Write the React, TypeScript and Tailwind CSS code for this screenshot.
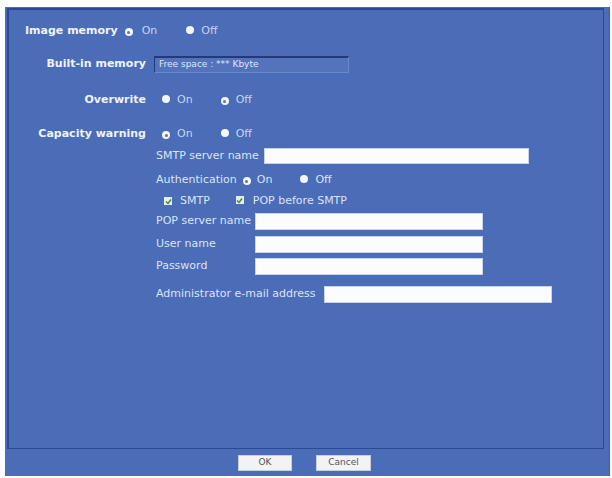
import React from 'react';

const font = { fontFamily: '"DejaVu Sans", Verdana, sans-serif' };

const Radio = ({ ring }: { ring?: boolean }) =>
  ring ? (
    <span className="inline-flex w-[8px] h-[8px] rounded-full bg-[#f4f6fb] items-center justify-center">
      <span className="w-[3px] h-[3px] rounded-full bg-[#5a74b4]" />
    </span>
  ) : (
    <span className="inline-block w-[8px] h-[8px] rounded-full bg-[#f4f6fb]" />
  );

const Check = () => (
  <span className="inline-flex w-[8px] h-[8px] bg-[#e4ecea] items-center justify-center">
    <svg width="7" height="7" viewBox="0 0 7 7">
      <path d="M1 3.5 L3 5.5 L6 1.5" stroke="#3f8a3a" strokeWidth="1.4" fill="none" />
    </svg>
  </span>
);

const Field = ({ w }: { w: string }) => (
  <div className={`h-full bg-[#fbfcfe] border border-[#c9d3ea] ${w}`} />
);

export default function App() {
  return (
    <div className="w-[612px] h-[478px] bg-white pt-[7px] pl-[5px]" style={font}>
      {/* window frame */}
      <div className="w-[605px] h-[469px] bg-[#4b6cb6] flex flex-col border-r border-[#3f5ea8]">
        {/* main panel */}
        <div className="ml-[2px] mt-[1px] w-[597px] h-[441px] border-t-2 border-l-2 border-r border-b border-[#2c4a93] text-[11px] text-[#dbe3f4]">
          {/* Image memory */}
          <div className="mt-[14px] h-[14px] flex items-center pl-[16px]">
            <span className="font-bold text-[#eef2fa]">Image memory</span>
            <span className="ml-[7px]"><Radio ring /></span>
            <span className="ml-[9px] text-[#c9d5ee]">On</span>
            <span className="ml-[29px]"><Radio /></span>
            <span className="ml-[7px] text-[#c9d5ee]">Off</span>
          </div>

          {/* Built-in memory */}
          <div className="mt-[18px] h-[17px] flex items-center">
            <span className="w-[137px] text-right font-bold text-[#eef2fa]">Built-in memory</span>
            <div className="ml-[8px] w-[195px] h-full bg-[#5573bb] border-t-2 border-l border-[#23397a] border-b border-r border-b-[#6d88c8] border-r-[#6d88c8] flex items-center pl-[4px] text-[9px] text-[#dfe6f5]">
              Free space : *** Kbyte
            </div>
          </div>

          {/* Overwrite */}
          <div className="mt-[20px] h-[14px] flex items-center">
            <span className="w-[137px] text-right font-bold text-[#eef2fa]">Overwrite</span>
            <span className="ml-[16px]"><Radio /></span>
            <span className="ml-[7px] text-[#c9d5ee]">On</span>
            <span className="ml-[28px]"><Radio ring /></span>
            <span className="ml-[7px] text-[#c9d5ee]">Off</span>
          </div>

          {/* Capacity warning */}
          <div className="mt-[20px] h-[14px] flex items-center">
            <span className="w-[137px] text-right font-bold text-[#eef2fa]">Capacity warning</span>
            <span className="ml-[16px]"><Radio ring /></span>
            <span className="ml-[7px] text-[#c9d5ee]">On</span>
            <span className="ml-[28px]"><Radio /></span>
            <span className="ml-[7px] text-[#c9d5ee]">Off</span>
          </div>

          <div className="pl-[147px]">
            <div className="mt-[7px] h-[16px] flex items-center">
              <span className="w-[108px] whitespace-nowrap">SMTP server name</span>
              <Field w="w-[265px]" />
            </div>

            <div className="mt-[9px] h-[14px] flex items-center">
              <span>Authentication</span>
              <span className="ml-[6px]"><Radio ring /></span>
              <span className="ml-[6px]">On</span>
              <span className="ml-[28px]"><Radio /></span>
              <span className="ml-[7px]">Off</span>
            </div>

            <div className="mt-[7px] h-[14px] flex items-center pl-[8px]">
              <Check />
              <span className="ml-[8px]">SMTP</span>
              <span className="ml-[26px]"><Check /></span>
              <span className="ml-[9px]">POP before SMTP</span>
            </div>

            <div className="mt-[5px] h-[17px] flex items-center">
              <span className="w-[99px] whitespace-nowrap">POP server name</span>
              <Field w="w-[228px]" />
            </div>
            <div className="mt-[6px] h-[17px] flex items-center">
              <span className="w-[99px]">User name</span>
              <Field w="w-[228px]" />
            </div>
            <div className="mt-[5px] h-[17px] flex items-center">
              <span className="w-[99px]">Password</span>
              <Field w="w-[228px]" />
            </div>

            <div className="mt-[11px] h-[17px] flex items-center">
              <span className="w-[168px] whitespace-nowrap">Administrator e-mail address</span>
              <Field w="w-[228px]" />
            </div>
          </div>
        </div>

        {/* button strip */}
        <div className="flex-1 flex items-center pl-[233px] gap-[24px]">
          <button className="w-[54px] h-[16px] bg-[#f2f3f6] border border-[#c8cdd8] text-[9px] text-[#555]">OK</button>
          <button className="w-[55px] h-[16px] bg-[#f2f3f6] border border-[#c8cdd8] text-[9px] text-[#555]">Cancel</button>
        </div>
      </div>
    </div>
  );
}
